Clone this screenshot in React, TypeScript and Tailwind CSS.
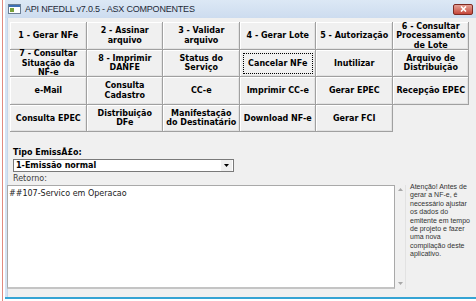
import React from "react";

const rows: string[][] = [
  ["1 - Gerar NFe", "2 - Assinar\narquivo", "3 - Validar\narquivo", "4 - Gerar Lote", "5 - Autorização", "6 - Consultar\nProcessamento\nde Lote"],
  ["7 - Consultar\nSituação da\nNF-e", "8 - Imprimir\nDANFE", "Status do\nServiço", "Cancelar NFe", "Inutilizar", "Arquivo de\nDistribuição"],
  ["e-Mail", "Consulta\nCadastro", "CC-e", "Imprimir CC-e", "Gerar EPEC", "Recepção EPEC"],
  ["Consulta EPEC", "Distribuição\nDFe", "Manifestação\ndo Destinatário", "Download NF-e", "Gerar FCI"],
];

function Btn({ label, focus }: { label: string; focus?: boolean }) {
  return (
    <div className="relative flex items-center justify-center bg-[#f0f0f0] text-center shadow-[inset_-1px_-1px_#a0a0a0,inset_1px_1px_#ffffff,inset_-2px_-2px_#e2e2e2]">
      {focus && <div className="absolute inset-[3px] border border-dotted border-black" />}
      <span className="whitespace-pre-line">{label}</span>
    </div>
  );
}

export default function App() {
  return (
    <div className="relative h-[301px] w-[476px] overflow-hidden bg-[#ffffff] font-['DejaVu_Sans',sans-serif] text-black">
      <div className="absolute left-[2px] top-0 h-[301px] w-px bg-[#e08a80]" />
      <div className="absolute left-[5px] top-0 flex h-[299px] w-[471px] flex-col border-b-2 border-[#35a4d4] bg-[#d4e3f4]">
        {/* title bar */}
        <div className="flex h-[18px] items-center bg-gradient-to-b from-[#dce8f5] to-[#cddcef]">
          <svg width="13" height="10" viewBox="0 0 13 10" className="ml-[3px]">
            <rect x="0.5" y="0.5" width="12" height="9" fill="#ffffff" stroke="#6b7f95" />
            <rect x="1" y="1" width="11" height="2" fill="#3d6fb4" />
            <rect x="2" y="4" width="4" height="4" fill="#7aa23c" />
          </svg>
          <span className="ml-[4px] font-['Liberation_Sans',sans-serif] text-[9px] leading-none tracking-[-0.2px] text-[#1e2a38]">
            API NFEDLL v7.0.5 - ASX COMPONENTES
          </span>
          <div className="ml-auto mr-[3px] flex h-[11px] w-[20px] items-center justify-center rounded-[2px] border border-[#7d2a22] bg-gradient-to-b from-[#e3a096] to-[#c5453a]">
            <svg width="7" height="6" viewBox="0 0 7 6">
              <path d="M1 0.5 L6 5.5 M6 0.5 L1 5.5" stroke="#ffffff" strokeWidth="1.6" />
            </svg>
          </div>
        </div>
        {/* body */}
        <div className="ml-[2px] flex flex-1 flex-col bg-[#f0f0f0] shadow-[inset_1px_0_#c5d6ea]">
          <div className="ml-[3px] mt-[4px] grid w-[459px] grid-cols-6 auto-rows-[27.5px] text-[8px] font-bold leading-[9.5px]">
            {rows.map((r, i) =>
              r.map((l, j) => <Btn key={`${i}-${j}`} label={l} focus={i === 1 && j === 3} />)
            )}
          </div>
          <div className="ml-[6px] mt-[16px] text-[8px] font-bold leading-[9px]">Tipo EmissÃ£o:</div>
          <div className="ml-[6px] mt-[2px] flex h-[13px] w-[221px] items-center border border-[#7a7a7a] bg-white">
            <span className="ml-[2px] text-[8px] font-bold leading-none">1-Emissão normal</span>
            <div className="ml-auto mr-px flex h-[11px] w-[11px] items-center justify-center bg-[#f0f0f0]">
              <svg width="5" height="3" viewBox="0 0 5 3">
                <path d="M0 0 H5 L2.5 3 Z" fill="#000" />
              </svg>
            </div>
          </div>
          <div className="ml-[6px] mt-[2px] text-[8px] leading-[9px] text-[#404040]">Retorno:</div>
          <div className="mt-[2px] flex h-[104px]">
            <div className="w-[388px] border border-[#a9a9a9] border-b-2 border-b-[#c4c4c4] bg-white pl-[1px] pt-[3px] text-[8px] leading-[9px] text-[#1a1a1a]">
              ##107-Servico em Operacao
            </div>
            <div className="flex w-[11px] flex-col items-center justify-between border-r border-[#e2e2e2] py-[2px]">
              <svg width="5" height="3" viewBox="0 0 5 3" className="mt-[1px]">
                <path d="M0 3 H5 L2.5 0 Z" fill="#a8a8a8" />
              </svg>
              <svg width="5" height="3" viewBox="0 0 5 3" className="mb-[2px]">
                <path d="M0 0 H5 L2.5 3 Z" fill="#a8a8a8" />
              </svg>
            </div>
            <div className="ml-[4px] mt-[-2px] w-[63px] font-['Liberation_Sans',sans-serif] text-[7px] leading-[8.4px] text-[#333333]">
              Atenção! Antes de gerar a NF-e, é necessário ajustar os dados do emitente em tempo de projeto e fazer uma nova compilação deste aplicativo.
            </div>
          </div>
        </div>
      </div>
    </div>
  );
}
